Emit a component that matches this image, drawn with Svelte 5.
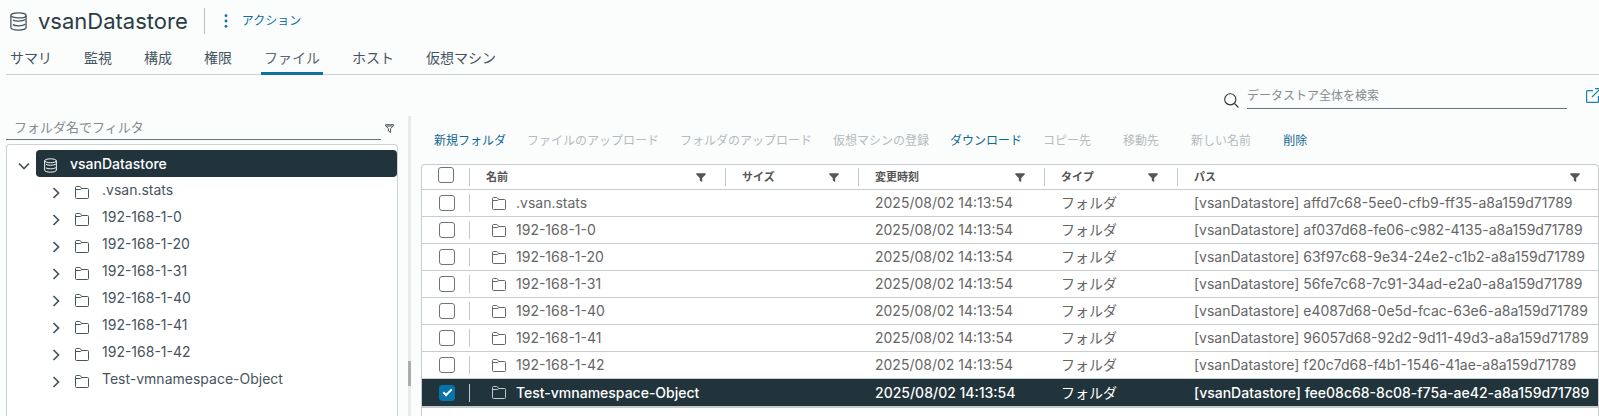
<script>
  const tabs = ['サマリ', '監視', '構成', '権限', 'ファイル', 'ホスト', '仮想マシン'];
  let activeTab = $state('ファイル');

  const primaryActions = [
    { label: '新規フォルダ', enabled: true },
    { label: 'ファイルのアップロード', enabled: false },
    { label: 'フォルダのアップロード', enabled: false },
    { label: '仮想マシンの登録', enabled: false },
    { label: 'ダウンロード', enabled: true }
  ];
  const itemActions = [
    { label: 'コピー先', enabled: false },
    { label: '移動先', enabled: false },
    { label: '新しい名前', enabled: false },
    { label: '削除', enabled: true }
  ];

  const columns = [
    { key: 'name', label: '名前' },
    { key: 'size', label: 'サイズ' },
    { key: 'time', label: '変更時刻' },
    { key: 'type', label: 'タイプ' },
    { key: 'path', label: 'パス' }
  ];

  let folders = $state([
    { name: '.vsan.stats', id: 'affd7c68-5ee0-cfb9-ff35-a8a159d71789', checked: false },
    { name: '192-168-1-0', id: 'af037d68-fe06-c982-4135-a8a159d71789', checked: false },
    { name: '192-168-1-20', id: '63f97c68-9e34-24e2-c1b2-a8a159d71789', checked: false },
    { name: '192-168-1-31', id: '56fe7c68-7c91-34ad-e2a0-a8a159d71789', checked: false },
    { name: '192-168-1-40', id: 'e4087d68-0e5d-fcac-63e6-a8a159d71789', checked: false },
    { name: '192-168-1-41', id: '96057d68-92d2-9d11-49d3-a8a159d71789', checked: false },
    { name: '192-168-1-42', id: 'f20c7d68-f4b1-1546-41ae-a8a159d71789', checked: false },
    { name: 'Test-vmnamespace-Object', id: 'fee08c68-8c08-f75a-ae42-a8a159d71789', checked: true }
  ]);
</script>

{#snippet datastore(size)}
  <svg class="icon" width={size} height={size + 2} viewBox="0 0 16 18" fill="none" stroke="currentColor" stroke-width="1.2" aria-hidden="true">
    <ellipse cx="8" cy="3.2" rx="7.2" ry="2.4" />
    <path d="M.8 3.2v11.6c0 1.3 3.2 2.4 7.2 2.4s7.2-1.1 7.2-2.4V3.2" />
    <path d="M2.6 7.6c1.2.7 3.2 1.1 5.4 1.1 2.9 0 5.4-.6 6.6-1.5M2.6 12c1.2.7 3.2 1.1 5.4 1.1 2.9 0 5.4-.6 6.6-1.5" />
  </svg>
{/snippet}

{#snippet folder()}
  <svg class="icon" width="14" height="13" viewBox="0 0 14 13" fill="none" stroke="currentColor" stroke-width="1" aria-hidden="true">
    <path d="M.5 11.500v-10q0-1 1-1h3.200q.6 0 .9.500l1 1.500h5.900q1 0 1 1v8q0 1-1 1h-11q-1 0-1-1z" />
    <path d="M.5 3.500h5q.8 0 1-1" />
  </svg>
{/snippet}

<div class="page">
  <header>
    <div class="title">
      {@render datastore(17)}
      <h1>vsanDatastore</h1>
      <button class="actions">
        <svg width="4" height="14" viewBox="0 0 4 14" fill="currentColor" aria-hidden="true">
          <circle cx="2" cy="1.7" r="1.4" /><circle cx="2" cy="7" r="1.4" /><circle cx="2" cy="12.3" r="1.4" />
        </svg>
        アクション
      </button>
    </div>
    <nav>
      {#each tabs as tab}
        <button class="tab" class:active={tab === activeTab} onclick={() => (activeTab = tab)}>{tab}</button>
      {/each}
    </nav>
  </header>

  <div class="search-row">
    <label for="search" aria-label="検索">
      <svg width="15" height="15" viewBox="0 0 15 15" fill="none" stroke="currentColor" stroke-width="1.1" aria-hidden="true">
        <circle cx="6.3" cy="6.3" r="5.6" /><path d="M10.5 10.5l4 4" />
      </svg>
    </label>
    <input id="search" type="text" placeholder="データストア全体を検索" />
    <a class="popout" href="#open" aria-label="新しいウィンドウで開く">
      <svg width="15" height="15" viewBox="0 0 15 15" fill="none" stroke="currentColor" stroke-width="1.2" aria-hidden="true">
        <path d="M7 2.600H1.600q-1 0-1 1v9.800q0 1 1 1h9.800q1 0 1-1V8M6 9l8-8M9 .7h5.300V6" />
      </svg>
    </a>
  </div>

  <main>
    <aside>
      <div class="filter">
        <input type="text" aria-label="フォルダ名でフィルタ" placeholder="フォルダ名でフィルタ" />
        <button aria-label="フィルタ">
          <svg width="9" height="9" viewBox="0 0 9 9" fill="none" stroke="currentColor" stroke-width="1" aria-hidden="true">
            <path d="M.5.7h8v1L5.600 4.600v3.900L3.400 7V4.600L.5 1.700z" /><path d="M1.200 2h6.600" />
          </svg>
        </button>
      </div>
      <div class="tree">
        <div class="node root">
          <button class="caret" aria-label="折りたたむ">
            <svg width="12" height="12" viewBox="0 0 12 12" fill="none" stroke="currentColor" stroke-width="1.7" aria-hidden="true"><path d="M1 3.500l5 5 5-5" /></svg>
          </button>
          <a class="selected" href="#root">{@render datastore(13)}<span>vsanDatastore</span></a>
        </div>
        {#each folders as f}
          <div class="node child">
            <button class="caret" aria-label="展開">
              <svg width="12" height="12" viewBox="0 0 12 12" fill="none" stroke="currentColor" stroke-width="1.7" aria-hidden="true"><path d="M3.500 1l5 5-5 5" /></svg>
            </button>
            <a href="#folder">{@render folder()}<span>{f.name}</span></a>
          </div>
        {/each}
      </div>
    </aside>

    <div class="splitter"><div class="handle"></div></div>

    <section>
      <div class="toolbar">
        <div class="group">
          {#each primaryActions as a}<button disabled={!a.enabled}>{a.label}</button>{/each}
        </div>
        <div class="group items">
          {#each itemActions as a}<button disabled={!a.enabled}>{a.label}</button>{/each}
        </div>
      </div>
      <div class="grid">
        <table>
          <colgroup>
            <col class="c-check" /><col class="c-name" /><col class="c-size" /><col class="c-time" /><col class="c-type" /><col />
          </colgroup>
          <thead>
            <tr>
              <th class="check"><input type="checkbox" aria-label="すべて選択" /></th>
              {#each columns as c}
                <th>
                  <div class="head">
                    {c.label}
                    <button aria-label="{c.label}のフィルタ">
                      <svg width="10" height="9" viewBox="0 0 10 9" fill="currentColor" aria-hidden="true"><path d="M.3.3h9.400v1.200L6.200 5v4L3.800 7.700V5L.3 1.500z" /></svg>
                    </button>
                  </div>
                </th>
              {/each}
            </tr>
          </thead>
          <tbody>
            {#each folders as f}
              <tr class:picked={f.checked}>
                <td class="check"><input type="checkbox" aria-label={f.name} bind:checked={f.checked} /></td>
                <td><div class="name">{@render folder()}{f.name}</div></td>
                <td></td>
                <td>2025/08/02 14:13:54</td>
                <td class="type">フォルダ</td>
                <td>[vsanDatastore] {f.id}</td>
              </tr>
            {/each}
          </tbody>
        </table>
      </div>
    </section>
  </main>
</div>

<style>
  :global(body) {
    background: #fbfdfd;
  }
  .page {
    box-sizing: border-box;
    height: 100vh;
    padding-left: 6px;
    display: flex;
    flex-direction: column;
    overflow: hidden;
    font-family: Inter, 'Noto Sans CJK JP', sans-serif;
    font-size: 14px;
    line-height: 20px;
    color: #46545d;
  }
  button {
    border: 0;
    padding: 0;
    background: none;
    font: inherit;
    color: inherit;
    cursor: pointer;
  }
  a {
    color: inherit;
    text-decoration: none;
  }
  svg {
    display: block;
    flex: none;
  }
  input {
    font: inherit;
    color: inherit;
  }
  input[type='text'] {
    box-sizing: border-box;
    min-width: 0;
    border: 0;
    border-bottom: 1px solid #66747c;
    background: none;
    outline: none;
  }
  input::placeholder {
    color: #858b8f;
    opacity: 1;
  }

  .title {
    display: flex;
    align-items: center;
    height: 42px;
    padding-left: 4px;
  }
  h1 {
    margin: 0 16px 0 11px;
    font-size: 22px;
    font-weight: 400;
    line-height: 26px;
    color: #2b3b44;
  }
  .actions {
    display: flex;
    align-items: center;
    gap: 14px;
    height: 26px;
    padding-left: 19px;
    border-left: 1px solid #b8bfc2;
    font-size: 12px;
    color: #0f6f9f;
  }
  nav {
    display: flex;
    gap: 26px;
    padding-left: 1px;
    border-bottom: 1px solid #ccd1d3;
  }
  .tab {
    height: 33px;
    margin-bottom: -1px;
    padding: 2px 3px 0;
    border-bottom: 3px solid transparent;
    white-space: nowrap;
  }
  .tab.active {
    border-bottom-color: #0f719f;
    color: #5c666c;
  }

  .search-row {
    display: flex;
    justify-content: flex-end;
    align-items: center;
    height: 41px;
    font-size: 12px;
  }
  .search-row label {
    margin: 9px 8px 0 0;
    color: #333;
  }
  .search-row input {
    width: 320px;
    height: 26px;
    padding: 0;
    margin-top: 1px;
  }
  .popout {
    margin-left: 19px;
    margin-right: -2px;
    color: #1a7fae;
  }

  main {
    flex: 1;
    min-height: 0;
    display: flex;
  }
  aside {
    width: 392px;
    flex: none;
    display: flex;
    flex-direction: column;
  }
  .filter {
    display: flex;
    align-items: center;
    gap: 2px;
    height: 24px;
    margin-bottom: 4px;
    font-size: 13px;
  }
  .filter input {
    flex: 1;
    height: 24px;
    padding: 0 8px 2px;
  }
  .filter button {
    padding: 0 4px 0 2px;
  }
  .tree {
    flex: 1;
    padding-top: 5px;
    border: 1px solid #c9d2d5;
    border-bottom: 0;
    border-radius: 4px 4px 0 0;
    background: #fff;
  }
  .node {
    display: flex;
    align-items: center;
    height: 27px;
  }
  .node a {
    flex: 1;
    display: flex;
    align-items: center;
  }
  .caret {
    padding-top: 4px;
  }
  .root {
    padding-left: 11px;
    gap: 6px;
  }
  .root .selected {
    height: 27px;
    padding-left: 8px;
    gap: 13px;
    border-radius: 4px;
    background: #21333b;
    color: #fff;
  }
  .root span {
    font-weight: 500;
  }
  .child {
    padding-left: 43px;
    gap: 13px;
  }
  .child a {
    gap: 13px;
  }
  .child span {
    padding-bottom: 1px;
  }
  .node :global(.icon) {
    margin-top: 4px;
  }

  .splitter {
    width: 3px;
    flex: none;
    margin: 0 10px;
    display: flex;
    flex-direction: column;
    justify-content: flex-end;
    background: #e8eaeb;
  }
  .handle {
    height: 25px;
    margin-bottom: 30px;
    background: #a9adaf;
  }

  section {
    flex: 1;
    min-width: 0;
    display: flex;
    flex-direction: column;
  }
  .toolbar {
    box-sizing: border-box;
    display: flex;
    align-items: center;
    gap: 21px;
    height: 48px;
    padding: 2px 0 0 13px;
    font-size: 12px;
    color: #0f6693;
    white-space: nowrap;
  }
  .group {
    display: flex;
    gap: 21px;
  }
  .items {
    gap: 32px;
  }
  .group button:disabled {
    color: #b5babd;
    cursor: default;
  }

  .grid {
    flex: 1;
    border: 1px solid #c8cccf;
    border-bottom: 0;
    border-radius: 4px 4px 0 0;
    background: #fff;
    overflow: hidden;
  }
  table {
    width: 100%;
    table-layout: fixed;
    border-spacing: 0;
    color: #666;
  }
  .c-check { width: 48px; }
  .c-name { width: 256px; }
  .c-size { width: 133px; }
  .c-time { width: 186px; }
  .c-type { width: 133px; }
  th,
  td {
    box-sizing: border-box;
    height: 27px;
    padding: 0 0 0 16px;
    border-bottom: 1px solid #c8cccf;
    text-align: left;
    white-space: nowrap;
  }
  th {
    height: 25px;
    font-size: 11px;
    font-weight: 700;
    color: #555;
  }
  th:not(:last-child),
  td.check {
    background: linear-gradient(#c4c8ca, #c4c8ca) right center / 1px 18px no-repeat;
  }
  .head {
    display: flex;
    align-items: center;
    justify-content: space-between;
    padding-right: 20px;
  }
  th:last-child .head {
    padding-right: 18px;
  }
  .name {
    display: flex;
    align-items: center;
    gap: 10px;
    padding-left: 6px;
  }
  input[type='checkbox'] {
    appearance: none;
    display: block;
    box-sizing: border-box;
    width: 16px;
    height: 16px;
    margin: 0 0 0 1px;
    border: 1px solid #6b757b;
    border-radius: 3px;
    background: #fff;
  }
  th input[type='checkbox'] {
    margin: 0 0 4px;
  }
  input[type='checkbox']:checked {
    border-color: #0474ab;
    background: #0474ab;
  }
  input[type='checkbox']:checked::after {
    content: '';
    display: block;
    width: 7px;
    height: 3px;
    margin: 3px 0 0 3px;
    border: solid #fff;
    border-width: 0 0 2px 2px;
    transform: rotate(-45deg);
  }
  .picked td {
    height: 29px;
    border-bottom: 2px solid #c8cccf;
    background-color: #21333b;
    background-clip: padding-box;
    color: #fff;
    font-weight: 500;
  }
  .picked td.type {
    font-weight: 400;
  }
  .picked :global(.icon) {
    color: #c3c9cc;
  }
</style>
